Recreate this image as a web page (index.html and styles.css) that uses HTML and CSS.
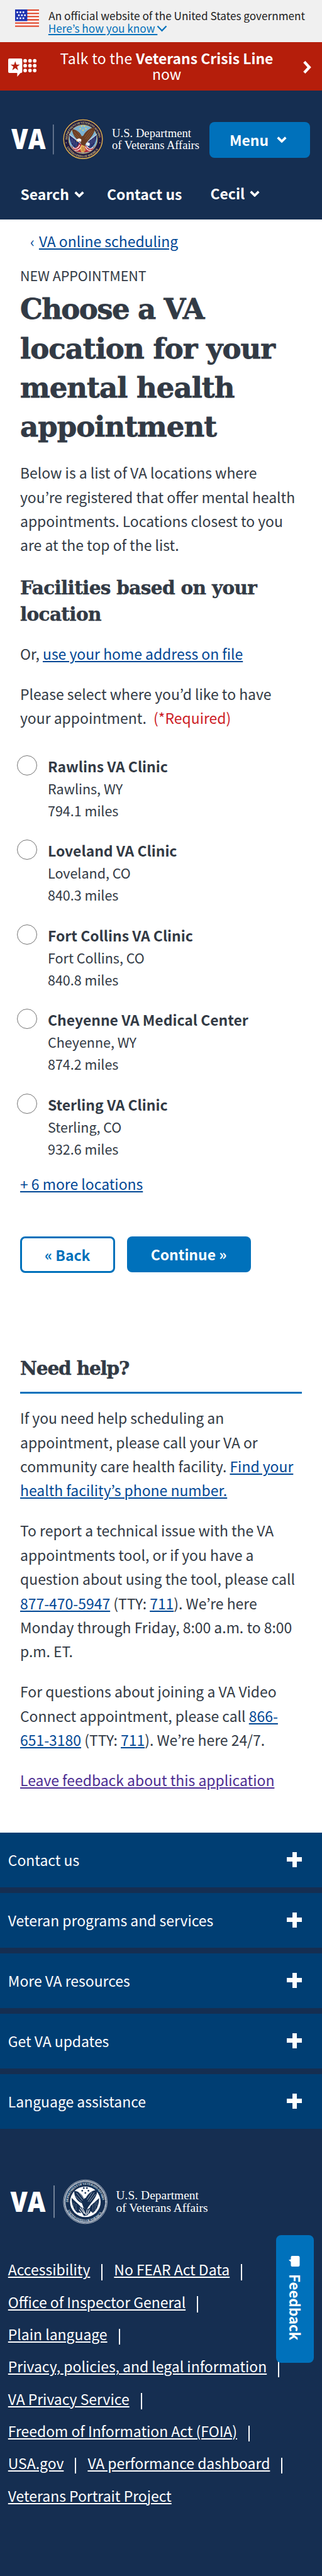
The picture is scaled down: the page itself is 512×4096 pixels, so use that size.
FILE: index.html
```html
<!DOCTYPE html>
<html lang="en">
<head>
<meta charset="utf-8">
<title>Choose a VA location | Veterans Affairs</title>
<link rel="stylesheet" href="styles.css">
</head>
<body>
<div class="gov-banner">
  <svg class="flag" viewBox="0 0 38 28" width="38" height="28">
    <rect width="38" height="28" fill="#fff"/>
    <path d="M0 1.2h38M0 6.3h38M0 11.4h38M0 16.5h38M0 21.6h38M0 26.7h38" stroke="#e0492f" stroke-width="2.3"/>
    <rect width="19.4" height="18.6" fill="#1e33b1"/>
    <path d="M2.3 4.5h2.6m2.2 0h2.6m2.2 0h2.6M4.7 9.3h2.6m2.2 0h2.6m2.2 0h2.6M2.3 14h2.6m2.2 0h2.6m2.2 0h2.6" stroke="#fff" stroke-width="2.6"/>
  </svg>
  <div class="gov-text">
    <div>An official website of the United States government</div>
    <div class="know"><a href="#">Here’s how you know </a><svg width="17" height="11" viewBox="0 0 17 11"><path d="M1.5 1.5 8.5 8.8 15.500 1.500" fill="none" stroke="#0071bb" stroke-width="2.2"/></svg></div>
  </div>
</div>

<div class="crisis">
  <svg class="crisis-icon" width="46" height="30" viewBox="0 0 46 30">
    <path fill="#fff" d="M2 0h18.400a2 2 0 0 1 2 2v19a2 2 0 0 1-2 2h-.8L14.400 29V23H2a2 2 0 0 1-2-2V2a2 2 0 0 1 2-2z"/>
    <path fill="#b51e0b" d="M11.200 4.200 13 9.700H18.600L14.100 13.100 15.900 18.800 11.200 15.300 6.500 18.800 8.300 13.100 3.800 9.700H9.400z"/>
    <g fill="#fff"><circle cx="27" cy="3.700" r="2.850"/><circle cx="34.700" cy="3.700" r="2.850"/><circle cx="42.200" cy="3.700" r="2.850"/><circle cx="27" cy="11.400" r="2.850"/><circle cx="34.700" cy="11.400" r="2.850"/><circle cx="42.200" cy="11.400" r="2.850"/><circle cx="27" cy="19.100" r="2.850"/><circle cx="34.700" cy="19.100" r="2.850"/><circle cx="42.200" cy="19.100" r="2.850"/></g>
  </svg>
  <div class="crisis-text"><span>Talk to the </span><b>Veterans Crisis Line</b><br>now</div>
  <svg class="crisis-arrow" width="15" height="22" viewBox="0 0 15 22"><path d="M2.800 2.200 10.800 10.900 2.800 19.600" fill="none" stroke="#fff" stroke-width="4.400"/></svg>
</div>

<header class="header">
  <div class="brand-row">
    <svg class="logo" width="304" height="66" viewBox="16 188 304 66">
      <defs>
        <path id="ringTop" d="M-38.500 3A38.600 38.600 0 1 1 38.500 3"/>
        <path id="ringBottom" d="M-43 12A44.600 44.600 0 0 0 43 12"/>
      </defs>
      <text class="va" x="18" y="237" textLength="54.500" lengthAdjust="spacingAndGlyphs">VA</text>
      <path d="M84.800 198v47.400" stroke="#8592a8" stroke-width="1.300"/>
      <g transform="translate(132 221.300) scale(.645)">
        <circle r="50" fill="#1f1a44"/>
        <circle r="47.800" fill="none" stroke="#d3b051" stroke-width="2.400"/>
        <circle r="35.500" fill="#7db4d3" stroke="#c6a24c" stroke-width="1.400"/>
        <g class="ring-text" fill="#d8c27a">
          <text><textPath href="#ringTop" textLength="118" startOffset="2">DEPARTMENT OF VETERANS AFFAIRS</textPath></text>
          <text><textPath href="#ringBottom" textLength="94" startOffset="8">UNITED STATES OF AMERICA</textPath></text>
          <circle cx="-41.500" cy="9" r="1.200"/><circle cx="41.500" cy="9" r="1.200"/>
        </g>
        <g fill="#f2d65a"><circle cx="-3.500" cy="-32" r="1.700"/><circle cx="3.500" cy="-32" r="1.700"/><circle cx="-7" cy="-26" r="1.700"/><circle cx="7" cy="-26" r="1.700"/><circle cy="-22" r="1.700"/></g>
        <path d="M-34-11C-31 8-30 15-16 24L-5 8zM34-11C31 8 30 15 16 24L6 8z" fill="#28306b"/>
        <path d="M-34-12-6 10M34-12 6 10" stroke="#e9edf2" stroke-width="1.600"/>
        <path d="M-27 0v9M-22 4v10M-17 9v9M22-1v14M27-4v12M17 5v12" stroke="#bcc6df" stroke-width="1.200" stroke-dasharray="1.500 2"/>
        <path d="M-29 15C-22 27-12 20-10 9L-2 14 8 16C12 23 22 28 29 15 26 29 12 33 0 33S-26 29-29 15z" fill="#b6323c"/>
        <path d="M-25 21C-18 25-12 23-8 14M-21 27C-12 29-7 25-4 17M25 21C18 25 14 23 9 18M21 27C13 29 8 25 6 18" fill="none" stroke="#fff" stroke-width="1.800"/>
        <path d="M-27-25C-18-24-8-19-3-7L1-9C7-20 16-27 29-29 30-19 24-8 13 3L7 11 3 18-4 13-9 3C-18-1-26-10-27-25z" fill="#6a3d24"/>
        <path d="M-22-19-6 0M-17-22-4-5M-23-12-9 0M22-22 6 0M26-20 10 1M17-22 4-5" stroke="#94623a" stroke-width="1.300"/>
        <path d="M-16 3C-15-2-8-3-4 1L-5 7C-8 4-11 5-15 6z" fill="#fff"/><path d="M-17 3-13 3-15 7z" fill="#e5b33c"/>
        <path d="M7 10C10 6 16 7 17 12L15 17 9 15z" fill="#e8f0f5"/>
        <path d="M-4 14 4 17 6 27 2 33-4 32-7 24z" fill="#e9bd5b"/><path d="M-2 18v12M2 19v12" stroke="#a4452f" stroke-width="1.400"/>
      </g>
      <text class="dept" x="178" y="218.200" textLength="126">U.S. Department</text>
      <text class="dept" x="178" y="236.800" textLength="139">of Veterans Affairs</text>
    </svg>
    <button class="menu-btn">Menu <svg class="chev" viewBox="0 0 16 10"><path d="M1.700 1.700 8 7.800 14.300 1.700"/></svg></button>
  </div>
  <nav class="top-nav">
    <div class="nav-search">Search<svg class="chev" viewBox="0 0 16 10"><path d="M1.700 1.700 8 7.800 14.300 1.700"/></svg></div>
    <div class="nav-contact">Contact us</div>
    <div class="nav-user">Cecil<svg class="chev" viewBox="0 0 16 10"><path d="M1.700 1.700 8 7.800 14.300 1.700"/></svg></div>
  </nav>
</header>

<main>
  <div class="crumb">‹<a href="#">VA online scheduling</a></div>
  <div class="eyebrow">NEW APPOINTMENT</div>
  <h1>Choose a VA<br>location for your<br>mental health<br>appointment</h1>
  <p class="intro">Below is a list of VA locations where<br>you’re registered that offer mental health<br>appointments. Locations closest to you<br>are at the top of the list.</p>
  <h2>Facilities based on your<br>location</h2>
  <p class="or">Or, <a href="#">use your home address on file</a></p>
  <p>Please select where you’d like to have<br>your appointment. <span class="required">(*Required)</span></p>
  <div class="options">
    <label class="option"><i class="radio"></i><span><b>Rawlins VA Clinic</b><small>Rawlins, WY</small><small>794.1 miles</small></span></label>
    <label class="option"><i class="radio"></i><span><b>Loveland VA Clinic</b><small>Loveland, CO</small><small>840.3 miles</small></span></label>
    <label class="option"><i class="radio"></i><span><b>Fort Collins VA Clinic</b><small>Fort Collins, CO</small><small>840.8 miles</small></span></label>
    <label class="option"><i class="radio"></i><span><b>Cheyenne VA Medical Center</b><small>Cheyenne, WY</small><small>874.2 miles</small></span></label>
    <label class="option"><i class="radio"></i><span><b>Sterling VA Clinic</b><small>Sterling, CO</small><small>932.6 miles</small></span></label>
  </div>
  <p class="more"><a href="#">+ 6 more locations</a></p>
  <div class="actions"><button class="back">« Back</button><button class="next">Continue »</button></div>
  <section class="help">
    <h2>Need help?</h2>
    <p>If you need help scheduling an<br>appointment, please call your VA or<br>community care health facility. <a href="#">Find your<br>health facility’s phone number.</a></p>
    <p>To report a technical issue with the VA<br>appointments tool, or if you have a<br>question about using the tool, please call<br><a href="#">877-470-5947</a> (TTY: <a href="#">711</a>). We’re here<br>Monday through Friday, 8:00 a.m. to 8:00<br>p.m. ET.</p>
    <p>For questions about joining a VA Video<br>Connect appointment, please call <a href="#">866-<br>651-3180</a> (TTY: <a href="#">711</a>). We’re here 24/7.</p>
    <p><a class="visited" href="#">Leave feedback about this application</a></p>
  </section>
</main>

<footer>
  <div class="accordion">
    <div class="panel">Contact us<i class="plus"></i></div>
    <div class="panel">Veteran programs and services<i class="plus"></i></div>
    <div class="panel">More VA resources<i class="plus"></i></div>
    <div class="panel">Get VA updates<i class="plus"></i></div>
    <div class="panel">Language assistance<i class="plus"></i></div>
  </div>
  <svg class="foot-logo" width="320" height="72" viewBox="14 3465 320 72">
    <text class="va" x="16.500" y="3517" textLength="56" lengthAdjust="spacingAndGlyphs">VA</text>
    <path d="M86 3475v51.500" stroke="#a5afbf" stroke-width="1.300"/>
    <g transform="translate(135.700 3501) scale(.705)">
      <circle r="49.400" fill="#152e51" stroke="#dfe4ea" stroke-width="1"/>
      <circle r="46.300" fill="none" stroke="#e8ecf1" stroke-width="3.400" stroke-dasharray="2 1"/>
      <g class="ring-text mono" fill="#dfe4ea">
        <text><textPath href="#ringTop" textLength="118" startOffset="2">DEPARTMENT OF VETERANS AFFAIRS</textPath></text>
        <text><textPath href="#ringBottom" textLength="94" startOffset="8">UNITED STATES OF AMERICA</textPath></text>
      </g>
      <circle r="34.500" fill="#fff"/>
      <g fill="#152e51">
        <circle cx="-3.500" cy="-31" r="1.900"/><circle cx="3.500" cy="-31" r="1.900"/><circle cx="-7" cy="-25" r="1.900"/><circle cx="7" cy="-25" r="1.900"/><circle cy="-20" r="1.900"/>
        <path d="M-25-25C-16-24-8-19-3-7L1-9C7-20 16-26 26-27 28-18 22-8 13 3L7 11 3 18-4 13-8 3C-18-1-26-12-25-25z"/>
        <path d="M-31-9-12 9-8 18-17 25C-26 19-31 6-31-9zM31-8 12 9 8 18 17 25C26 19 31 6 31-8z"/>
        <path d="M-14 10-4 14 4 17 13 12 11 24 4 31-3 32-8 26-16 24z"/>
      </g>
      <path d="M-20-20-6-3M-15-22-3-6M-22-13-9 0M20-21 6 0M23-17 10 0M15-22 4-5" stroke="#fff" stroke-width=".8"/>
      <path d="M-26 3v8M-21 6v12M22 2v16M26 0v11M17 7v15" stroke="#cfd6df" stroke-width="1.200" stroke-dasharray="1.500 2"/>
      <path d="M-12 13-2 27M-8 12 1 29M-14 18-6 28M4 18 2 30M9 17 5 28" stroke="#fff" stroke-width="1.500"/>
    </g>
    <text class="dept big" x="184.500" y="3497" textLength="131.500">U.S. Department</text>
    <text class="dept big" x="184.500" y="3517" textLength="146">of Veterans Affairs</text>
  </svg>
  <div class="links">
    <div><a href="#">Accessibility</a><i></i><a href="#">No FEAR Act Data</a><i></i></div>
    <div><a href="#">Office of Inspector General</a><i></i></div>
    <div><a href="#">Plain language</a><i></i></div>
    <div><a href="#">Privacy, policies, and legal information</a><i></i></div>
    <div><a href="#">VA Privacy Service</a><i></i></div>
    <div><a href="#">Freedom of Information Act (FOIA)</a><i></i></div>
    <div><a href="#">USA.gov</a><i></i><a href="#">VA performance dashboard</a><i></i></div>
    <div><a href="#">Veterans Portrait Project</a></div>
  </div>
</footer>

<div class="feedback">
  <svg width="18" height="20" viewBox="0 0 18 20"><path fill="#fff" d="M5.500 1h9.500a2.500 2.500 0 0 1 2.500 2.500v12a2.500 2.500 0 0 1-2.500 2.500H5.500A2 2 0 0 1 3.500 16V10.500L0 7.500 3.500 6.500V3A2 2 0 0 1 5.500 1z"/></svg>
  <span>Feedback</span>
</div>
</body>
</html>
```

FILE: styles.css
```css
* { box-sizing: border-box; }
html, body { margin: 0; }
body {
  position: relative;
  width: 512px;
  height: 4096px;
  overflow: hidden;
  background: #fff;
  color: #323a45;
  font: 22.93px/38.4px "Noto Sans CJK JP", "Noto Sans", sans-serif;
  white-space: nowrap;
}
a { color: #004795; text-decoration: underline; text-decoration-thickness: 1.6px; text-underline-offset: 2px; }
p, h1, h2 { margin: 0; }
svg { display: block; flex: none; }
button { border: 0; margin: 0; padding: 0; font: inherit; font-weight: 700; white-space: nowrap; }

.gov-banner {
  display: flex;
  height: 67.2px;
  padding: 15.4px 0 0 24.3px;
  background: #f0f0f0;
  color: #212121;
  font-size: 17.2px;
  line-height: 19.2px;
}
.gov-text { margin-left: 15px; }
.know { display: flex; margin-left: -.5px; }
.know a { color: #0071bb; white-space: pre; }
.know svg { margin: 5px 0 0 -1px; }

.crisis { display: flex; height: 76.8px; background: #b51e0b; color: #fff; line-height: 25.6px; }
.crisis-icon { margin: 25.600px 0 0 12.800px; }
.crisis-text { width: 412.400px; padding-top: 12.400px; text-align: center; }
.crisis-text span { letter-spacing: .3px; }
.crisis-arrow { margin: 28.600px 0 0 9.800px; }

.header { height: 204.800px; padding-top: 44.200px; background: #152e51; color: #fff; font-weight: 700; }
.brand-row { display: flex; padding-left: 16px; }
.va { font: 800 44.800px "Open Sans", sans-serif; fill: #fff; }
.dept { font: 18.600px "Liberation Serif", serif; fill: #fff; }
.dept.big { font-size: 19.400px; }
.ring-text { font: 700 7.200px "Liberation Serif", serif; }
.menu-btn {
  display: flex;
  align-items: center;
  width: 160px;
  height: 57.600px;
  margin: 5.400px 0 0 13px;
  padding-left: 32px;
  border-radius: 8px;
  background: #0071bb;
  color: #fff;
}
.chev { width: 16px; height: 10px; fill: none; stroke: #fff; stroke-width: 3.700px; }
.menu-btn .chev { margin-left: 13px; }
.top-nav { display: grid; grid-template-columns: 137.500px 164.500px auto; margin-top: 34.600px; padding-left: 32.500px; }
.top-nav > div { display: flex; }
.top-nav .chev { margin: 15.200px 0 0 8px; }
.nav-user { margin-top: -1.200px; }

main { height: 2565.600px; padding: 15.400px 32px 0; }
.crumb { padding-left: 16px; color: #004795; }
.crumb a { margin-left: 7px; }
.eyebrow { margin-top: 19.900px; font-size: 21.500px; line-height: 32px; letter-spacing: -.05px; }
h1, h2 { font-family: "DejaVu Serif", serif; font-weight: 700; }
h1 { margin-top: 7px; font-size: 45px; line-height: 62.300px; letter-spacing: -.950px; -webkit-text-stroke: .8px #323a45; }
h1::first-line { letter-spacing: -1.600px; }
h2 { margin-top: 28.600px; font-size: 29.500px; line-height: 41.600px; letter-spacing: -.650px; -webkit-text-stroke: .5px #323a45; }
.intro { margin-top: 21.500px; }
.or { margin: 22.500px 0 25.600px; }
.required { margin-left: 6px; color: #cd2026; }

.options { margin-top: 40.100px; }
.option { display: flex; height: 134.450px; }
.option:last-child { height: 105.200px; }
.option b, .option small { display: block; }
.option b { line-height: 34.800px; }
.option small { font-size: 21.500px; line-height: 35.200px; }
.radio { width: 32px; height: 32px; margin: 0 17px 0 -5px; border: 1.600px solid #757575; border-radius: 50%; }
.more { margin-top: 18.600px; }
.actions { display: flex; gap: 19px; margin-top: 64.800px; }
.actions button { height: 57.600px; border-radius: 8px; }
.actions .back { width: 150.500px; height: 58.600px; border: 3px solid #0071bb; background: #fff; color: #0071bb; }
.actions .next { width: 197px; background: #0071bb; color: #fff; }

.help { margin-top: 130.900px; }
.help h2 { margin: 0 0 18.700px; padding-bottom: 16.700px; border-bottom: 3.200px solid #0071bb; letter-spacing: -1.150px; }
.help p + p { margin-top: 25.500px; }
.visited { color: #4c2c92; }

footer { height: 1181.600px; background: #152e51; color: #fff; }
.accordion { display: grid; gap: 9.600px; }
.panel {
  display: flex;
  align-items: center;
  justify-content: space-between;
  height: 86.400px;
  padding: 0 32px 0 12.800px;
  background: #003e73;
}
.plus {
  width: 24px;
  height: 24px;
  margin-top: -1.500px;
  background: linear-gradient(#fff, #fff) center / 24px 7px no-repeat, linear-gradient(#fff, #fff) center / 7px 24px no-repeat;
}
.foot-logo { margin: 80.200px 0 46.600px 14px; }
.links { padding-left: 12.800px; }
.links div { display: flex; height: 51.300px; line-height: 51.300px; }
.links a { color: #fff; }
.links i { width: 2px; height: 25.600px; margin: 16.600px 18px 0; background: #fff; }

.feedback {
  position: absolute;
  top: 3554px;
  left: 439px;
  width: 60px;
  height: 203px;
  padding-top: 32px;
  border-radius: 8px;
  background: #0071bb;
  color: #fff;
}
.feedback svg { margin-left: 20px; }
.feedback span { display: block; width: 60px; margin-top: 10px; font-size: 22.300px; font-weight: 700; line-height: 58px; writing-mode: vertical-rl; }
```
